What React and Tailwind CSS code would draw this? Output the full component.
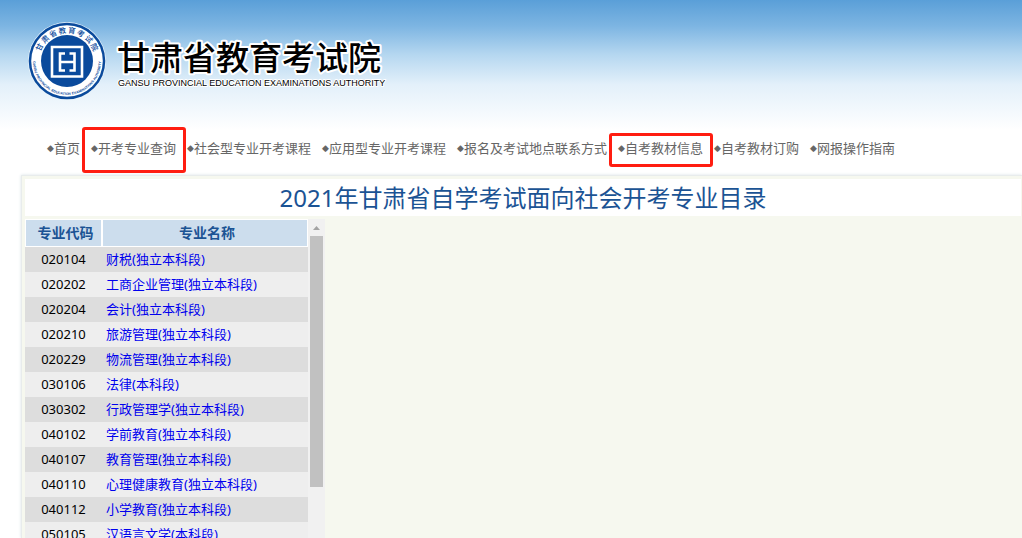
const NAV_ITEMS = [
  { label: '首页' },
  { label: '开考专业查询', mark: '-top-[11px] -bottom-[15px]' },
  { label: '社会型专业开考课程' },
  { label: '应用型专业开考课程' },
  { label: '报名及考试地点联系方式' },
  { label: '自考教材信息', mark: '-top-[5px] -bottom-[9px]' },
  { label: '自考教材订购' },
  { label: '网报操作指南' },
];

const MAJORS = [
  ['020104', '财税(独立本科段)'],
  ['020202', '工商企业管理(独立本科段)'],
  ['020204', '会计(独立本科段)'],
  ['020210', '旅游管理(独立本科段)'],
  ['020229', '物流管理(独立本科段)'],
  ['030106', '法律(本科段)'],
  ['030302', '行政管理学(独立本科段)'],
  ['040102', '学前教育(独立本科段)'],
  ['040107', '教育管理(独立本科段)'],
  ['040110', '心理健康教育(独立本科段)'],
  ['040112', '小学教育(独立本科段)'],
  ['050105', '汉语言文学(本科段)'],
];

export default function App() {
  return (
    <div className="h-screen flex flex-col overflow-hidden bg-white font-['Noto_Sans','Noto_Sans_CJK_SC',sans-serif]">
      <header className="bg-[linear-gradient(#5a9fd8,#7db5e2_20%,#b5d7f0_42%,#e3f0fa_65%,#fff)] h-[130px] shrink-0 pt-[22px] pl-7">
        <Brand />
      </header>
      <Nav />
      <main className="flex-1 min-h-0 ml-[21px] flex flex-col bg-[#f6f8ef] border-t border-l border-[#e8ecec] shadow-[0_0_3px_#d9e3e6] pt-[3px] pl-[3px]">
        <h1 className="bg-white mr-px h-[37px] leading-[37px] shrink-0 text-center text-2xl text-[#1b5394]">
          2021年甘肃省自学考试面向社会开考专业目录
        </h1>
        <div className="flex-1 min-h-0 mt-[3px] w-[300px] flex overflow-hidden">
          <MajorTable />
          <ScrollBar />
        </div>
      </main>
    </div>
  );
}

function Brand() {
  return (
    <a href="#" className="inline-flex items-center gap-3 text-black">
      <Emblem />
      <svg width="272" height="78" viewBox="0 0 272 78" className="overflow-visible">
        <g stroke="#fff" strokeLinejoin="round" paintOrder="stroke">
          <text x="-1" y="48" fontSize="33" fontWeight="500" strokeWidth="4" fontFamily="Noto Sans CJK SC, sans-serif">甘肃省教育考试院</text>
          <text x="0" y="64" fontSize="9" strokeWidth="2" fontFamily="Liberation Sans, sans-serif">GANSU PROVINCIAL EDUCATION EXAMINATIONS AUTHORITY</text>
        </g>
      </svg>
    </a>
  );
}

function Emblem() {
  return (
    <svg width="78" height="78" viewBox="0 0 78 78">
      <defs>
        <path id="arc-bottom" d="M5.5 33.1A34 34 0 1 0 72.5 33.1" />
      </defs>
      <circle cx="39" cy="39" r="39" fill="#e8f4fc" />
      <circle cx="39" cy="39" r="38.3" fill="#0a4a9c" />
      <circle cx="39" cy="39" r="35.8" fill="#fff" />
      <circle cx="39" cy="39" r="26" fill="#0a4a9c" />
      <g fontSize="7.5" fontWeight="500" fill="#0a4a9c" textAnchor="middle" fontFamily="Noto Sans CJK SC, sans-serif">
        {[...'甘肃省教育考试院'].map((char, i) => (
          <text key={char} x="39" y="11" transform={`rotate(${-63 + i * 18} 39 39)`}>{char}</text>
        ))}
      </g>
      <text fontSize="3.5" fontWeight="700" fill="#0a4a9c" textAnchor="middle" fontFamily="Liberation Sans, sans-serif">
        <textPath href="#arc-bottom" startOffset="50%">GANSU PROVINCIAL EDUCATION EXAMINATIONS AUTHORITY</textPath>
      </text>
      <g fill="none" stroke="#fff" strokeWidth="2.6">
        <path d="M24 25H54V54.5H24Z" />
        <path d="M37 31.5H32V48.5H37M41.5 31.5H46.5V48.5H41.5M32 40H46.5" />
      </g>
    </svg>
  );
}

function Nav() {
  return (
    <nav className="flex gap-[11px] pl-[47px] pt-2 pb-[17px] shrink-0 text-[13px] leading-5 text-[#666]">
      {NAV_ITEMS.map(item => (
        <a key={item.label} href="#" className="relative flex whitespace-nowrap">
          <span className="w-[7px] text-[9px] font-['DejaVu_Sans',sans-serif]">◆</span>
          {item.label}
          {item.mark && (
            <span className={`absolute -left-[9px] -right-[10px] rounded-[3px] border-3 border-[#ff1d10] ${item.mark}`} />
          )}
        </a>
      ))}
    </nav>
  );
}

function MajorTable() {
  return (
    <table className="w-[283px] self-start table-fixed border-separate border-spacing-0 text-[13px]">
      <thead>
        <tr className="h-7 text-sm text-[#1b5394]">
          <th className="w-[77px] border border-white bg-[#ccdded] p-0 pl-1">专业代码</th>
          <th className="border border-white bg-[#ccdded] p-0 pl-1">专业名称</th>
        </tr>
      </thead>
      <tbody>
        {MAJORS.map(([code, name]) => (
          <tr key={code} className="h-[25px] odd:bg-[#ddd] even:bg-[#eee]">
            <td className="p-0 text-center">{code}</td>
            <td className="p-0 pl-1">
              <a href="#" className="text-[#00e]">{name}</a>
            </td>
          </tr>
        ))}
      </tbody>
    </table>
  );
}

function ScrollBar() {
  return (
    <div className="flex-1 flex flex-col items-center bg-[#f1f1f1]">
      <svg width="17" height="17" viewBox="0 0 17 17" className="shrink-0">
        <path d="M5 11L8.5 7L12 11Z" fill="#a3a3a3" />
      </svg>
      <div className="w-[13px] h-[251px] shrink-0 bg-[#c1c1c1]" />
    </div>
  );
}
